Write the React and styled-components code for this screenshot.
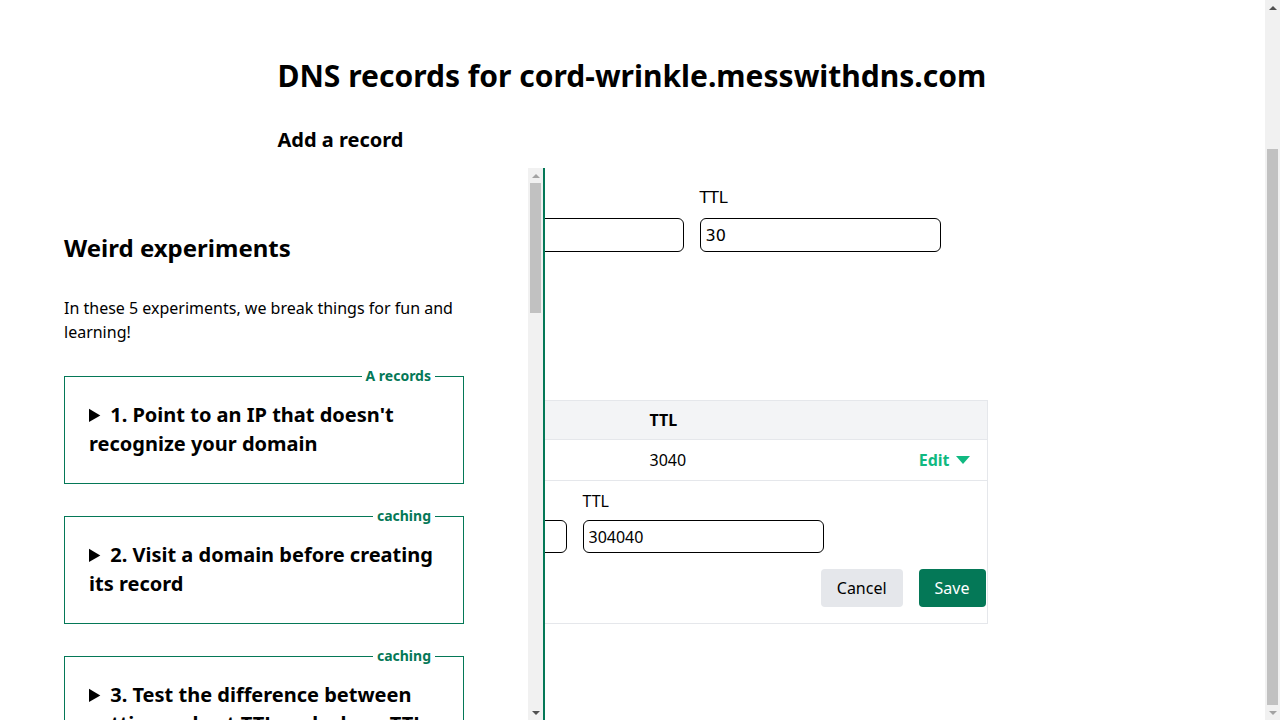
import React, { useLayoutEffect } from "react";
import styled, { createGlobalStyle } from "styled-components";

const GlobalStyle = createGlobalStyle`
  html {
    overflow-y: scroll;
  }
  body {
    margin: 0;
    padding-right: 15px;
    font-family: "Noto Sans", "Open Sans", sans-serif;
    font-size: 16px;
    line-height: 24px;
    color: #000;
    background: #fff;
  }
  * {
    box-sizing: border-box;
  }
`;

const green = "#047857";

const SiteHeader = styled.header`
  height: 183px;
  padding: 24px 64px;
  font-size: 20px;
  font-weight: 700;
`;

const Main = styled.main`
  width: 710px;
  margin: 0 auto;
  padding: 48px 0 96px;
`;

const Title = styled.h1`
  margin: 0;
  font-size: 30px;
  line-height: 36px;
  font-weight: 700;
  white-space: nowrap;
`;

const SectionTitle = styled.h2`
  margin: 32px 0 0;
  font-size: 20px;
  line-height: 28px;
  font-weight: 700;
`;

const FormRow = styled.div`
  display: flex;
  gap: 16px;
  margin-top: ${(p) => (p.$flush ? 0 : 32)}px;
`;

const Field = styled.label`
  display: flex;
  flex-direction: column;
  gap: ${(p) => p.$gap || 8}px;
  width: ${(p) => p.$width}px;
  font-family: ${(p) => (p.$plain ? '"DejaVu Sans", sans-serif' : "inherit")};
`;

const Input = styled.input`
  height: ${(p) => p.$height || 34}px;
  width: 100%;
  border: 1px solid #000;
  border-radius: 6px;
  padding: 0 5px;
  font-family: inherit;
  font-size: 16px;
  color: #000;
  background: #fff;
  outline: none;
`;

const ButtonRow = styled.div`
  display: flex;
  gap: 16px;
  margin-top: ${(p) => p.$top || 0}px;
  justify-content: ${(p) => (p.$end ? "flex-end" : "flex-start")};
`;

const Button = styled.button`
  height: 38px;
  padding: 0 16px;
  border: none;
  border-radius: 4px;
  font-family: inherit;
  font-size: 16px;
  background: ${(p) => (p.$primary ? green : "#e5e7eb")};
  color: ${(p) => (p.$primary ? "#fff" : "#000")};
  cursor: pointer;
`;

const Table = styled.div`
  margin-top: 86px;
  border: 1px solid #e5e7eb;
`;

const Row = styled.div`
  display: grid;
  grid-template-columns: 200px 155px 1fr auto;
  align-items: center;
  background: ${(p) => (p.$head ? "#f3f4f6" : "#fff")};
  border-bottom: 1px solid #e5e7eb;
  font-weight: ${(p) => (p.$head ? 700 : 400)};
`;

const Cell = styled.div`
  padding: 8px 16px;
  line-height: ${(p) => (p.$head ? 22 : 24)}px;
`;

const EditLink = styled.span`
  display: flex;
  align-items: center;
  gap: 6px;
  color: #10b981;
  font-weight: 700;
  padding-right: 1px;
`;

const EditPanel = styled.div`
  padding: 8px 1px 16px 16px;
`;

/* the browser hides real scrollbars here, so the rails are drawn */
const PageRail = styled.div`
  position: fixed;
  top: 0;
  right: 0;
  bottom: 0;
  z-index: 20;
`;

const Rail = styled.div`
  width: 15px;
  height: 100%;
  display: flex;
  flex-direction: column;
  background: #f1f1f1;
  flex-shrink: 0;
`;

const RailButton = styled.div`
  height: 15px;
  display: flex;
  align-items: center;
  justify-content: center;
  &::after {
    content: "";
    width: 0;
    height: 0;
    border-left: 4px solid transparent;
    border-right: 4px solid transparent;
    ${(p) => (p.$up ? "border-bottom" : "border-top")}: 4px solid
      ${(p) => (p.$dim ? "#a3a3a3" : "#505050")};
  }
`;

const RailTrack = styled.div`
  flex: 1;
  padding: 0 2px;
`;

const Thumb = styled.div`
  background: #c1c1c1;
  margin-top: ${(p) => p.$offset}px;
  height: ${(p) => p.$size}px;
`;

const Sidebar = styled.aside`
  position: fixed;
  top: 168px;
  left: 0;
  bottom: 0;
  width: 545px;
  display: flex;
  background: #fff;
  border-right: 2px solid ${green};
  z-index: 10;
`;

const SidebarScroll = styled.div`
  flex: 1;
  overflow-y: auto;
`;

const SidebarInner = styled.div`
  min-height: 2216px;
  padding: 64px;
`;

const SidebarTitle = styled.h2`
  margin: 0 0 32px;
  font-size: 24px;
  line-height: 32px;
  font-weight: 700;
`;

const Intro = styled.p`
  margin: 0 0 32px;
`;

const CardList = styled.div`
  display: flex;
  flex-direction: column;
  gap: 32px;
`;

const Card = styled.div`
  position: relative;
  border: 1px solid ${green};
  padding: 23px 24px 25px;
`;

const Tag = styled.span`
  position: absolute;
  top: -11px;
  right: 28px;
  padding: 0 4px;
  background: #fff;
  color: ${green};
  font-size: 14px;
  line-height: 20px;
  font-weight: 700;
`;

const CardTitle = styled.summary`
  font-size: 20px;
  line-height: 29px;
  font-weight: 700;
  cursor: pointer;
`;

const experiments = [
  { tag: "A records", title: "1. Point to an IP that doesn't recognize your domain" },
  { tag: "caching", title: "2. Visit a domain before creating its record" },
  { tag: "caching", title: "3. Test the difference between setting a short TTL and a long TTL" },
  { tag: "CNAME records", title: "4. Make a CNAME record on the root domain" },
  { tag: "subdomains", title: "5. Break a subdomain with a CNAME" },
];

function Caret() {
  return (
    <svg width="14" height="8" viewBox="0 0 14 8">
      <path d="M0 0 L14 0 L7 8 Z" fill="#10b981" />
    </svg>
  );
}

function Scrollbar({ offset, size, atTop, atBottom }) {
  return (
    <Rail>
      <RailButton $up $dim={atTop} />
      <RailTrack>
        <Thumb $offset={offset} $size={size} />
      </RailTrack>
      <RailButton $dim={atBottom} />
    </Rail>
  );
}

export default function App() {
  useLayoutEffect(() => {
    window.scrollTo(0, document.documentElement.scrollHeight);
  }, []);

  return (
    <>
      <GlobalStyle />
      <SiteHeader>Mess With DNS</SiteHeader>
      <Main>
        <Title>DNS records for cord-wrinkle.messwithdns.com</Title>
        <SectionTitle>Add a record</SectionTitle>
        <FormRow>
          <Field $width={190} $plain>
            Name
            <Input />
          </Field>
          <Field $width={200} $plain>
            Value
            <Input />
          </Field>
          <Field $width={241} $plain>
            TTL
            <Input defaultValue="30" />
          </Field>
        </FormRow>
        <ButtonRow $top={24}>
          <Button $primary>Create</Button>
        </ButtonRow>

        <Table>
          <Row $head>
            <Cell $head>Name</Cell>
            <Cell $head>Type</Cell>
            <Cell $head>TTL</Cell>
            <Cell $head />
          </Row>
          <Row>
            <Cell>www</Cell>
            <Cell>A</Cell>
            <Cell>3040</Cell>
            <Cell>
              <EditLink>
                Edit <Caret />
              </EditLink>
            </Cell>
          </Row>
          <EditPanel>
            <FormRow $flush>
              <Field $width={272} $gap={7}>
                Name
                <Input $height={33} />
              </Field>
              <Field $width={241} $gap={7}>
                TTL
                <Input $height={33} defaultValue="304040" />
              </Field>
            </FormRow>
            <ButtonRow $top={16} $end>
              <Button>Cancel</Button>
              <Button $primary>Save</Button>
            </ButtonRow>
          </EditPanel>
        </Table>
      </Main>

      <Sidebar>
        <SidebarScroll>
          <SidebarInner>
            <SidebarTitle>Weird experiments</SidebarTitle>
            <Intro>In these 5 experiments, we break things for fun and learning!</Intro>
            <CardList>
              {experiments.map((e) => (
                <Card key={e.title}>
                  <Tag>{e.tag}</Tag>
                  <details>
                    <CardTitle>{e.title}</CardTitle>
                  </details>
                </Card>
              ))}
            </CardList>
          </SidebarInner>
        </SidebarScroll>
        <Scrollbar offset={0} size={130} atTop />
      </Sidebar>

      <PageRail>
        <Scrollbar offset={134} size={556} atBottom />
      </PageRail>
    </>
  );
}
